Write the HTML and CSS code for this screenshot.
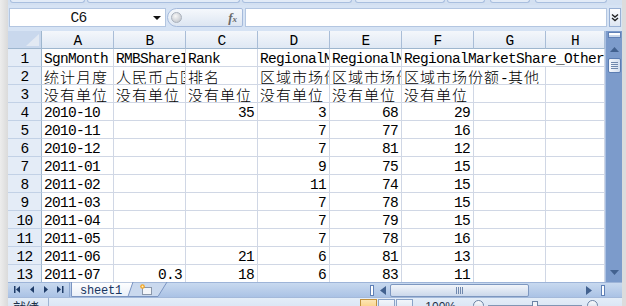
FILE: index.html
```html
<!DOCTYPE html>
<html lang="zh-CN">
<head>
    <meta charset="UTF-8">
    <title>sheet1</title>
    <link rel="stylesheet" href="styles.css">
</head>
<body>
<div class="window">
    <div class="frame-left"></div>
    <div class="excel">
        <div class="ribbon-edge">
            <span class="group g1"></span>
            <span class="group g2"></span>
            <span class="group g3"></span>
            <span class="group g4"></span>
            <span class="group g5"></span>
            <span class="group g6"></span>
            <span class="group g7"></span>
        </div>

        <div class="formula-bar">
            <div class="name-box"><span class="cell-ref">C6</span><span class="caret"></span></div>
            <div class="fx-pill"><span class="knob"></span><span class="fx">f<span class="fx-sub">x</span></span></div>
            <div class="formula-input"></div>
            <div class="expand">
                <svg width="8" height="9" viewBox="0 0 8 9"><path d="M1 1.5 L4 4 L7 1.5 M1 5 L4 7.5 L7 5" fill="none" stroke="#222" stroke-width="1.4"/></svg>
            </div>
        </div>

        <div class="sheet">
            <div class="grid">
                <div class="corner"><svg width="15" height="13" viewBox="0 0 15 13"><polygon points="14,0 14,12 1,12" fill="#e2e9f3"/></svg></div>
                <div class="ch">A</div><div class="ch">B</div><div class="ch">C</div><div class="ch">D</div>
                <div class="ch">E</div><div class="ch">F</div><div class="ch">G</div><div class="ch">H</div>

                <div class="rh">1</div>
                <div>SgnMonth</div>
                <div>RMBShareI</div>
                <div>Rank</div>
                <div>RegionalM</div>
                <div>RegionalM</div>
                <div class="span3">RegionalMarketShare_Other</div>

                <div class="rh">2</div>
                <div><span class="cn">统计月度</span></div>
                <div><span class="cn">人民币占国</span></div>
                <div><span class="cn">排名</span></div>
                <div><span class="cn">区域市场份</span></div>
                <div><span class="cn">区域市场份</span></div>
                <div class="span2"><span class="cn">区域市场份额</span>-<span class="cn">其他</span></div>
                <div></div>

                <div class="rh">3</div>
                <div><span class="cn">没有单位</span></div>
                <div><span class="cn">没有单位</span></div>
                <div><span class="cn">没有单位</span></div>
                <div><span class="cn">没有单位</span></div>
                <div><span class="cn">没有单位</span></div>
                <div><span class="cn">没有单位</span></div>
                <div></div><div></div>

                <div class="rh">4</div><div>2010-10</div><div class="n"></div><div class="n">35</div><div class="n">3</div><div class="n">68</div><div class="n">29</div><div></div><div></div>
                <div class="rh">5</div><div>2010-11</div><div class="n"></div><div class="n"></div><div class="n">7</div><div class="n">77</div><div class="n">16</div><div></div><div></div>
                <div class="rh">6</div><div>2010-12</div><div class="n"></div><div class="n"></div><div class="n">7</div><div class="n">81</div><div class="n">12</div><div></div><div></div>
                <div class="rh">7</div><div>2011-01</div><div class="n"></div><div class="n"></div><div class="n">9</div><div class="n">75</div><div class="n">15</div><div></div><div></div>
                <div class="rh">8</div><div>2011-02</div><div class="n"></div><div class="n"></div><div class="n">11</div><div class="n">74</div><div class="n">15</div><div></div><div></div>
                <div class="rh">9</div><div>2011-03</div><div class="n"></div><div class="n"></div><div class="n">7</div><div class="n">78</div><div class="n">15</div><div></div><div></div>
                <div class="rh">10</div><div>2011-04</div><div class="n"></div><div class="n"></div><div class="n">7</div><div class="n">79</div><div class="n">15</div><div></div><div></div>
                <div class="rh">11</div><div>2011-05</div><div class="n"></div><div class="n"></div><div class="n">7</div><div class="n">78</div><div class="n">16</div><div></div><div></div>
                <div class="rh">12</div><div>2011-06</div><div class="n"></div><div class="n">21</div><div class="n">6</div><div class="n">81</div><div class="n">13</div><div></div><div></div>
                <div class="rh">13</div><div>2011-07</div><div class="n">0.3</div><div class="n">18</div><div class="n">6</div><div class="n">83</div><div class="n">11</div><div></div><div></div>
            </div>

            <div class="vscroll">
                <span class="split-v"></span>
                <svg class="arrow-up" width="9" height="5" viewBox="0 0 9 5"><polygon points="4.5,0 9,5 0,5" fill="#42618f"/></svg>
                <span class="thumb-v"><i></i><i></i><i></i><i></i></span>
                <span class="track-fill"></span>
                <svg class="arrow-down" width="9" height="5" viewBox="0 0 9 5"><polygon points="0,0 9,0 4.5,5" fill="#42618f"/></svg>
            </div>
        </div>

        <div class="tab-bar">
            <svg class="nav" width="62" height="15" viewBox="0 0 62 15">
                <rect x="6" y="4" width="1.5" height="7" fill="#1f3c68"/>
                <polygon points="12,4 12,11 8,7.5" fill="#1f3c68"/>
                <polygon points="26,4 26,11 22,7.5" fill="#1f3c68"/>
                <polygon points="36,4 36,11 40,7.5" fill="#1f3c68"/>
                <polygon points="49,4 49,11 53,7.5" fill="#1f3c68"/>
                <rect x="54" y="4" width="1.5" height="7" fill="#1f3c68"/>
                <rect x="61" y="0" width="1" height="15" fill="#8ea8cf"/>
            </svg>
            <svg class="tabs" width="100" height="15" viewBox="0 0 100 15">
                <defs>
                    <linearGradient id="tabfill" x1="0" y1="0" x2="0" y2="1">
                        <stop offset="0" stop-color="#ffffff"/>
                        <stop offset="1" stop-color="#e9eff8"/>
                    </linearGradient>
                </defs>
                <polygon points="62,0 97,0 88,14.5 57,14.5" fill="#cad9ee" stroke="#7b95c2"/>
                <polygon points="1.5,0 63,0 58,14.5 1.5,14.5" fill="url(#tabfill)" stroke="#7b95c2"/>
                <text x="10" y="12" class="tab-label">sheet1</text>
                <rect x="72.5" y="5.5" width="9" height="7" fill="#f4f6f9" stroke="#8a97aa"/>
                <circle cx="72.5" cy="4.5" r="2.3" fill="#f4a424"/>
                <circle cx="72.5" cy="4.5" r="1" fill="#fff3c2"/>
            </svg>
            <span class="tab-spacer"></span>
            <div class="hscroll">
                <span class="split-h"></span>
                <svg width="6" height="9" viewBox="0 0 6 9"><polygon points="6,0 6,9 0,4.5" fill="#42618f"/></svg>
                <span class="thumb-h"><svg width="8" height="7" viewBox="0 0 8 7"><path d="M0.5 0 V7 M2.5 0 V7 M4.5 0 V7 M6.5 0 V7" stroke="#7088ad"/></svg></span>
                <span class="track-fill"></span>
                <svg width="6" height="9" viewBox="0 0 6 9"><polygon points="0,0 0,9 6,4.5" fill="#42618f"/></svg>
                <span class="split-h end"></span>
            </div>
            <span class="corner-box"></span>
        </div>

        <div class="status-bar">
            <span class="status-text">就绪</span>
            <span class="status-sep"></span>
            <span class="status-spacer"></span>
            <span class="views"><i class="on"></i><i></i><i></i></span>
            <span class="zoom-text">100%</span>
            <span class="zoom-btn"></span>
            <span class="zoom-line"><i></i></span>
            <span class="zoom-btn"></span>
        </div>
    </div>
    <div class="frame-right"></div>
</div>
</body>
</html>
```

FILE: styles.css
```css
* {
    box-sizing: border-box;
}

body {
    margin: 0;
    width: 626px;
    height: 306px;
    overflow: hidden;
    background: #dedede;
    font-family: "Liberation Mono", monospace;
}

.window {
    display: flex;
    height: 306px;
}

.frame-left {
    width: 8px;
    flex: none;
    background: linear-gradient(to right, #ededed, #dadada);
}

.frame-right {
    flex: 1;
    background: #dcdcdc;
}

.excel {
    width: 614px;
    flex: none;
    display: flex;
    flex-direction: column;
    background: #cfdcef;
    overflow: hidden;
}

/* bottom edge of the ribbon */
.ribbon-edge {
    height: 5px;
    flex: none;
    display: flex;
    background: #d3e0f1;
}

.ribbon-edge .group {
    height: 3px;
    margin-left: 2px;
    border: 1px solid #a9bfdf;
    border-top: none;
    border-radius: 0 0 3px 3px;
    background: #e2ebf7;
}

.g1 { width: 75px; }
.g2 { width: 153px; }
.g3 { width: 110px; }
.g4 { width: 90px; margin-left: 3px !important; }
.g5 { width: 38px; }
.g6 { width: 40px; margin-left: 5px !important; }
.g7 { width: 72px; margin-left: 5px !important; }

/* formula bar */
.formula-bar {
    height: 26px;
    flex: none;
    display: flex;
    padding: 3px 1px 4px 1px;
    background: #d6e3f4;
}

.name-box {
    width: 157px;
    display: flex;
    align-items: center;
    background: #fff;
    border: 1px solid #b3c6e1;
}

.cell-ref {
    flex: 1;
    text-align: center;
    padding-right: 6px;
    font-size: 14.5px;
    letter-spacing: -0.7px;
    color: #111;
}

.caret {
    width: 0;
    height: 0;
    margin-right: 4px;
    border-left: 4px solid transparent;
    border-right: 4px solid transparent;
    border-top: 4px solid #111;
}

.fx-pill {
    width: 76px;
    margin-left: 1px;
    display: flex;
    align-items: center;
    justify-content: space-between;
    padding: 0 5px 0 3px;
    border: 1px solid #a5badb;
    border-radius: 10px 2px 2px 10px;
    background: linear-gradient(#f5f8fc, #dde6f2);
}

.knob {
    width: 11px;
    height: 11px;
    border-radius: 50%;
    border: 1px solid #a9b1bc;
    background: radial-gradient(circle at 40% 35%, #f7f7f7, #b8bdc5);
}

.fx {
    font-family: "Liberation Serif", serif;
    font-style: italic;
    font-weight: bold;
    font-size: 13px;
    color: #6a6a6a;
}

.fx-sub {
    font-size: 9px;
}

.formula-input {
    flex: 1;
    margin-left: 2px;
    background: #fff;
    border: 1px solid #b3c6e1;
}

.expand {
    width: 12px;
    margin-left: 2px;
    display: flex;
    align-items: center;
    justify-content: center;
    border: 1px solid #98b0d4;
    background: linear-gradient(#fdfdfe, #dde6f2);
}

/* worksheet */
.sheet {
    height: 251px;
    flex: none;
    display: flex;
    overflow: hidden;
}

.grid {
    width: 597px;
    flex: none;
    display: grid;
    grid-template-columns: 34px repeat(7, 72px) 59px;
    grid-auto-rows: 18px;
    background: #fff;
    font-size: 14.5px;
    letter-spacing: -0.7px;
    color: #000;
}

.grid > div {
    padding: 2px 3px 0 2px;
    line-height: 16px;
    white-space: nowrap;
    overflow: hidden;
    border-right: 1px solid #d0d7e5;
    border-bottom: 1px solid #d0d7e5;
}

.grid > .n {
    text-align: right;
}

.grid > .span2 {
    grid-column: span 2;
}

.grid > .span3 {
    grid-column: span 3;
}

.grid > .corner {
    padding: 0 1px 1px 0;
    display: flex;
    align-items: flex-end;
    justify-content: flex-end;
    background: #c9d8ed;
    border-right-color: #9eb6ce;
    border-bottom-color: #9eb6ce;
}

.grid > .ch {
    text-align: center;
    padding: 2px 0 0 0;
    background: linear-gradient(#f4f7fb, #dfe8f4);
    border-right-color: #a9bdd7;
    border-bottom-color: #9eb6ce;
}

.grid > .rh {
    text-align: center;
    padding: 2px 0 0 0;
    background: #e4ecf7;
    border-right-color: #9eb6ce;
    border-bottom-color: #c2d1e6;
}

.cn {
    font-family: "Noto Sans CJK SC", sans-serif;
    font-size: 15px;
    font-weight: 300;
    letter-spacing: 1px;
    line-height: 16px;
}

/* vertical scroll bar */
.vscroll {
    width: 17px;
    flex: none;
    display: flex;
    flex-direction: column;
    align-items: center;
    background: #7c9bcb;
    border-left: 1px solid #aac0e2;
}

.split-v {
    width: 13px;
    height: 6px;
    margin-top: 1px;
    background: #fff;
    border: 1px solid #5f80b6;
    box-shadow: inset 0 -2px 0 #c9d7ec;
}

.arrow-up {
    margin-top: 9px;
}

.thumb-v {
    width: 13px;
    height: 15px;
    margin-top: 6px;
    display: flex;
    flex-direction: column;
    justify-content: center;
    align-items: center;
    gap: 1px;
    border: 1px solid #5b7db2;
    border-radius: 2px;
    background: linear-gradient(to right, #f6f8fc, #d3dff0);
}

.thumb-v i {
    width: 7px;
    height: 1px;
    background: #7088ad;
}

.track-fill {
    flex: 1;
}

.arrow-down {
    margin-bottom: 7px;
}

/* sheet tabs row */
.tab-bar {
    height: 15px;
    flex: none;
    display: flex;
    background: linear-gradient(#c8d9ef, #aac2e5);
    border-top: 1px solid #9db4d8;
}

.tab-bar svg {
    flex: none;
}

.nav {
    margin-top: -1px;
}

.tabs {
    margin-top: -1px;
}

.tab-label {
    font-family: "Liberation Mono", monospace;
    font-size: 12px;
    letter-spacing: -0.2px;
    fill: #17345f;
}

.tab-spacer {
    flex: 1;
}

.hscroll {
    width: 235px;
    display: flex;
    align-items: center;
    gap: 0;
}

.hscroll > svg {
    margin: 0 4px 0 6px;
}

.split-h {
    width: 4px;
    height: 11px;
    background: #fff;
    border: 1px solid #5f80b6;
}

.split-h.end {
    margin-left: 5px;
}

.thumb-h {
    width: 139px;
    height: 13px;
    display: flex;
    align-items: center;
    justify-content: center;
    border: 1px solid #7d97c0;
    border-radius: 2px;
    background: linear-gradient(#f2f5fa, #cbd8eb);
}

.corner-box {
    width: 17px;
}

/* status bar, mostly cut off */
.status-bar {
    height: 22px;
    flex: none;
    display: flex;
    align-items: flex-start;
    padding-top: 2px;
    background: linear-gradient(#e4edf8, #cddcf0);
    border-top: 1px solid #a3b9da;
}

.status-text {
    margin-left: 5px;
    font-family: "Noto Sans CJK SC", sans-serif;
    font-size: 13px;
    line-height: 14px;
    color: #1d2f47;
}

.status-sep {
    width: 1px;
    height: 14px;
    margin: -2px 0 0 9px;
    background: #9fb4d3;
}

.status-spacer {
    flex: 1;
}

.views {
    display: flex;
    gap: 1px;
    margin-top: -1px;
}

.views i {
    width: 17px;
    height: 14px;
    border: 1px solid #8aa3c8;
    background: linear-gradient(#f3f6fb, #d5e0ef);
}

.views i.on {
    border-color: #c2913e;
    background: linear-gradient(#fde6b6, #f8c66d);
}

.zoom-text {
    margin-left: 12px;
    font-family: "Liberation Sans", sans-serif;
    font-size: 12px;
    line-height: 14px;
    color: #1d2f47;
}

.zoom-btn {
    width: 11px;
    height: 11px;
    margin-left: 17px;
    border-radius: 50%;
    border: 1px solid #6d84a6;
    background: linear-gradient(#fafbfd, #ccd7e6);
}

.zoom-line {
    width: 94px;
    height: 10px;
    margin-left: 4px;
    display: flex;
    justify-content: center;
    border-top: 1px solid #8196b4;
    margin-top: 5px;
}

.zoom-line i {
    width: 6px;
    height: 9px;
    margin-top: -5px;
    border: 1px solid #6d84a6;
    background: #f1f4f9;
}

.zoom-line + .zoom-btn {
    margin-left: 5px;
    margin-right: 24px;
}
```
